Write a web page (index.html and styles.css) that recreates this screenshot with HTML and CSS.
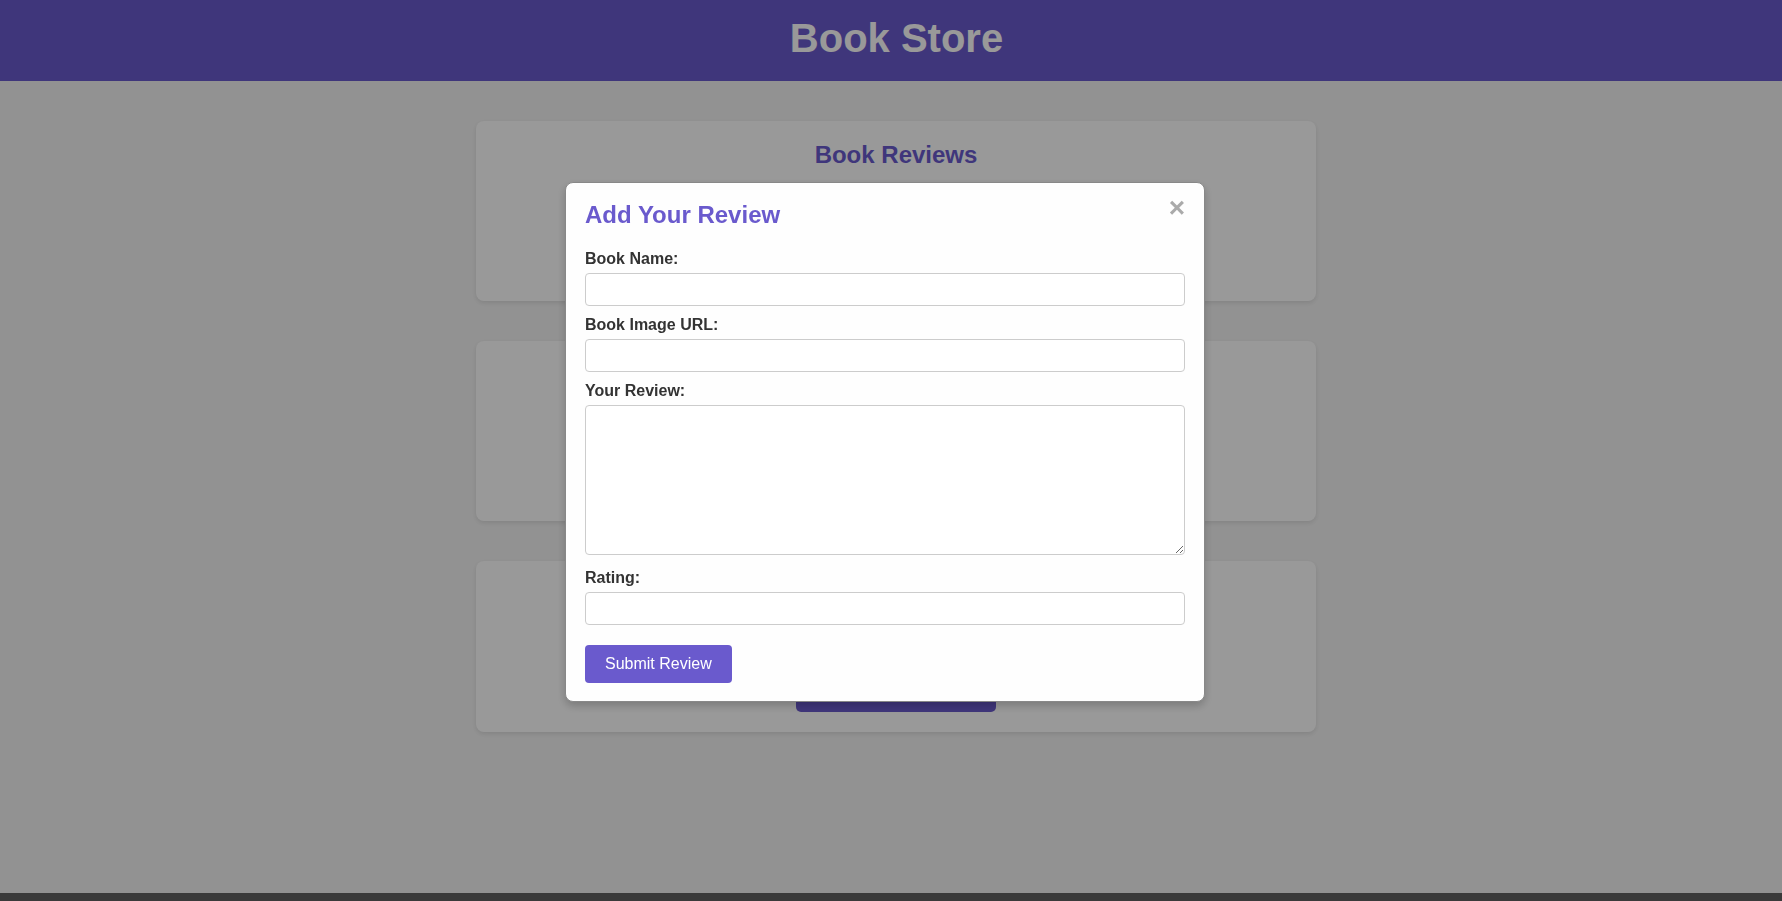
FILE: index.html
```html
<!DOCTYPE html>
<html lang="en">
<head>
  <meta charset="UTF-8">
  <title>Book Store</title>
  <link rel="stylesheet" href="styles.css">
</head>
<body class="modal-open">
  <header class="site-header">
    <h1 class="site-title">Book Store</h1>
  </header>

  <main class="main">
    <section class="card card-intro">
      <h2 class="card-title">Book Reviews</h2>
      <p class="card-text">Discover what readers think about their favourite books.</p>
    </section>

    <section class="card card-list">
      <p class="card-text">No reviews yet. Be the first to add one!</p>
    </section>

    <section class="card card-cta">
      <h2 class="card-title">Share Your Thoughts</h2>
      <p class="card-text">Read a great book recently? Let others know.</p>
      <button class="btn-primary" type="button">Add Review</button>
    </section>
  </main>

  <footer class="site-footer">
    <p class="footer-text">&copy; 2024 Book Store. All rights reserved.</p>
  </footer>

  <div class="modal-overlay">
    <div class="modal">
      <span class="close">&times;</span>
      <h2 class="modal-title">Add Your Review</h2>
      <form class="review-form">
        <label class="form-label" for="book-name">Book Name:</label>
        <input class="form-input" id="book-name" type="text">

        <label class="form-label" for="book-image">Book Image URL:</label>
        <input class="form-input" id="book-image" type="text">

        <label class="form-label" for="review">Your Review:</label>
        <textarea class="form-input form-textarea" id="review"></textarea>

        <label class="form-label" for="rating">Rating:</label>
        <input class="form-input" id="rating" type="text">

        <button class="btn-submit" type="submit">Submit Review</button>
      </form>
    </div>
  </div>
</body>
</html>
```

FILE: styles.css
```css
* {
  box-sizing: border-box;
}

body {
  margin: 0;
  font-family: "Liberation Sans", Arial, sans-serif;
  background: #f4f4f4;
  color: #333;
}

body.modal-open {
  overflow: hidden;
}

.site-header {
  background: #6a5acd;
  color: #fff;
  text-align: center;
  padding: 15px 0 20px 11px;
}

.site-title {
  margin: 0;
  font-size: 40px;
  line-height: 46px;
  font-weight: bold;
}

.main {
  min-height: 812px;
  padding: 40px 0 40px 10px;
  display: flex;
  flex-direction: column;
  align-items: center;
  gap: 40px;
}

.card {
  width: 840px;
  background: #fff;
  border-radius: 8px;
  padding: 20px;
  box-shadow: 0 2px 5px rgba(0, 0, 0, 0.1);
  text-align: center;
}

.card-intro,
.card-list {
  min-height: 180px;
}

.card-title {
  margin: 0 0 16px;
  font-size: 24px;
  color: #6a5acd;
}

.card-intro .card-title {
  margin-bottom: 24px;
}

.card-text {
  margin: 0 0 24px;
  font-size: 16px;
}

.card-list .card-text {
  margin-top: 60px;
}

.btn-primary {
  width: 200px;
  padding: 12px 20px;
  font-size: 18px;
  font-family: inherit;
  background: #6a5acd;
  color: #fff;
  border: none;
  border-radius: 5px;
}

.site-footer {
  background: #616161;
  color: #fff;
  text-align: center;
  padding: 20px;
}

.footer-text {
  margin: 0;
}

.modal-overlay {
  position: fixed;
  inset: 0;
  background: rgba(0, 0, 0, 0.4);
  display: flex;
  justify-content: center;
  align-items: flex-start;
  padding: 182px 12px 0 0;
}

.modal {
  position: relative;
  width: 640px;
  background: #fefefe;
  border: 1px solid #888;
  border-radius: 8px;
  padding: 18px 19px 18px;
  box-shadow: 0 4px 8px rgba(0, 0, 0, 0.2);
}

.close {
  position: absolute;
  top: 11px;
  right: 19px;
  font-size: 28px;
  font-weight: bold;
  line-height: 1;
  color: #aaa;
  cursor: pointer;
}

.modal-title {
  margin: 0 0 21px;
  font-size: 24px;
  color: #6a5acd;
}

.form-label {
  display: block;
  font-size: 16px;
  font-weight: bold;
  color: #333;
  margin-bottom: 5px;
}

.form-input {
  display: block;
  width: 100%;
  padding: 8px;
  margin: 0 0 10px;
  border: 1px solid #ccc;
  border-radius: 4px;
  font-family: inherit;
  font-size: 13.333px;
  background: #fff;
}

.form-textarea {
  height: 150px;
  margin-bottom: 14px;
}

.btn-submit {
  display: block;
  margin-top: 20px;
  padding: 10px 20px;
  font-size: 16px;
  font-family: inherit;
  background: #6a5acd;
  color: #fff;
  border: none;
  border-radius: 4px;
}
```
